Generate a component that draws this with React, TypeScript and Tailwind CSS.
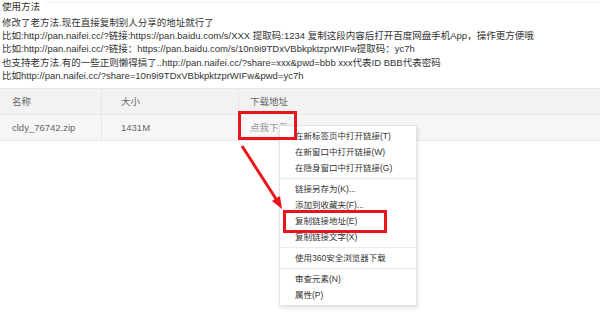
const lines = [
  "修改了老方法.现在直接复制别人分享的地址就行了",
  "比如:http://pan.naifei.cc/?链接:https://pan.baidu.com/s/XXX 提取码:1234 复制这段内容后打开百度网盘手机App，操作更方便哦",
  "比如:http://pan.naifei.cc/?链接：https://pan.baidu.com/s/10n9i9TDxVBbkpktzprWIFw提取码：yc7h",
  "也支持老方法.有的一些正则懒得搞了..http://pan.naifei.cc/?share=xxx&pwd=bbb xxx代表ID BBB代表密码",
  "比如http://pan.naifei.cc/?share=10n9i9TDxVBbkpktzprWIFw&pwd=yc7h",
];

const menuGroups = [
  ["在新标签页中打开链接(T)", "在新窗口中打开链接(W)", "在隐身窗口中打开链接(G)"],
  ["链接另存为(K)...", "添加到收藏夹(F)...", "复制链接地址(E)", "复制链接文字(X)"],
  ["使用360安全浏览器下载"],
  ["审查元素(N)", "属性(P)"],
];

const ContextMenu = () => (
  <div className="absolute left-[279px] top-[125px] w-[138px] bg-white border border-[#e3e3e3] shadow-[1px_2px_4px_rgba(0,0,0,0.12)] py-[2px] text-[8.5px] text-[#333]">
    {menuGroups.map((group, gi) => (
      <div key={gi}>
        {gi > 0 && <div className="my-[2px] h-px bg-[#ececec]" />}
        {group.map((item) => (
          <div key={item} className="h-[16px] flex items-center pl-[15px]">
            {item}
          </div>
        ))}
      </div>
    ))}
  </div>
);

const App = () => {
  return (
    <div
      className="relative w-[600px] h-[332px] bg-white overflow-hidden"
      style={{ fontFamily: '"Liberation Sans", Arial, "Noto Sans CJK SC", sans-serif' }}
    >
      <div className="absolute left-[45px] top-[2px] right-0 h-px bg-[#f0f0f0]" />

      <div className="pl-[2px] text-[9.5px] leading-[13.3px] text-[#333]">
        <div className="mb-[2.5px]">使用方法</div>
        {lines.map((l) => (
          <div key={l} className="whitespace-nowrap">{l}</div>
        ))}
      </div>

      <div className="mt-[6px] text-[9.5px] text-[#666]">
        <div className="grid grid-cols-[102px_137px_1fr] h-[27px] bg-[#f2f2f2] border-y border-[#e8e8e8]">
          <div className="flex items-center pl-[12px] border-r border-[#e8e8e8]">名称</div>
          <div className="flex items-center pl-[19px] border-r border-[#e8e8e8]">大小</div>
          <div className="flex items-center pl-[11px]">下载地址</div>
        </div>
        <div className="grid grid-cols-[102px_137px_1fr] h-[26px] bg-[#f6f6f6] border-b border-[#e8e8e8]">
          <div className="flex items-center pl-[12px] border-r border-[#e8e8e8]">cldy_76742.zip</div>
          <div className="flex items-center pl-[19px] border-r border-[#e8e8e8]">1431M</div>
          <div className="flex items-center pl-[11px] text-[#999]">点我下载</div>
        </div>
      </div>

      <ContextMenu />

      {/* red highlight boxes */}
      <div className="absolute left-[238px] top-[111px] w-[59px] h-[29px] border-[3px] border-[#e8161b]" />
      <div className="absolute left-[283px] top-[210px] w-[104px] h-[23px] border-[3px] border-[#e8161b]" />

      {/* arrow */}
      <svg className="absolute left-0 top-0" width="600" height="332" viewBox="0 0 600 332">
        <line x1="242" y1="146" x2="278" y2="202" stroke="#e8161b" strokeWidth="3" />
        <polygon points="282,209 272,201 280,196" fill="#e8161b" />
      </svg>
    </div>
  );
};

export default App;
